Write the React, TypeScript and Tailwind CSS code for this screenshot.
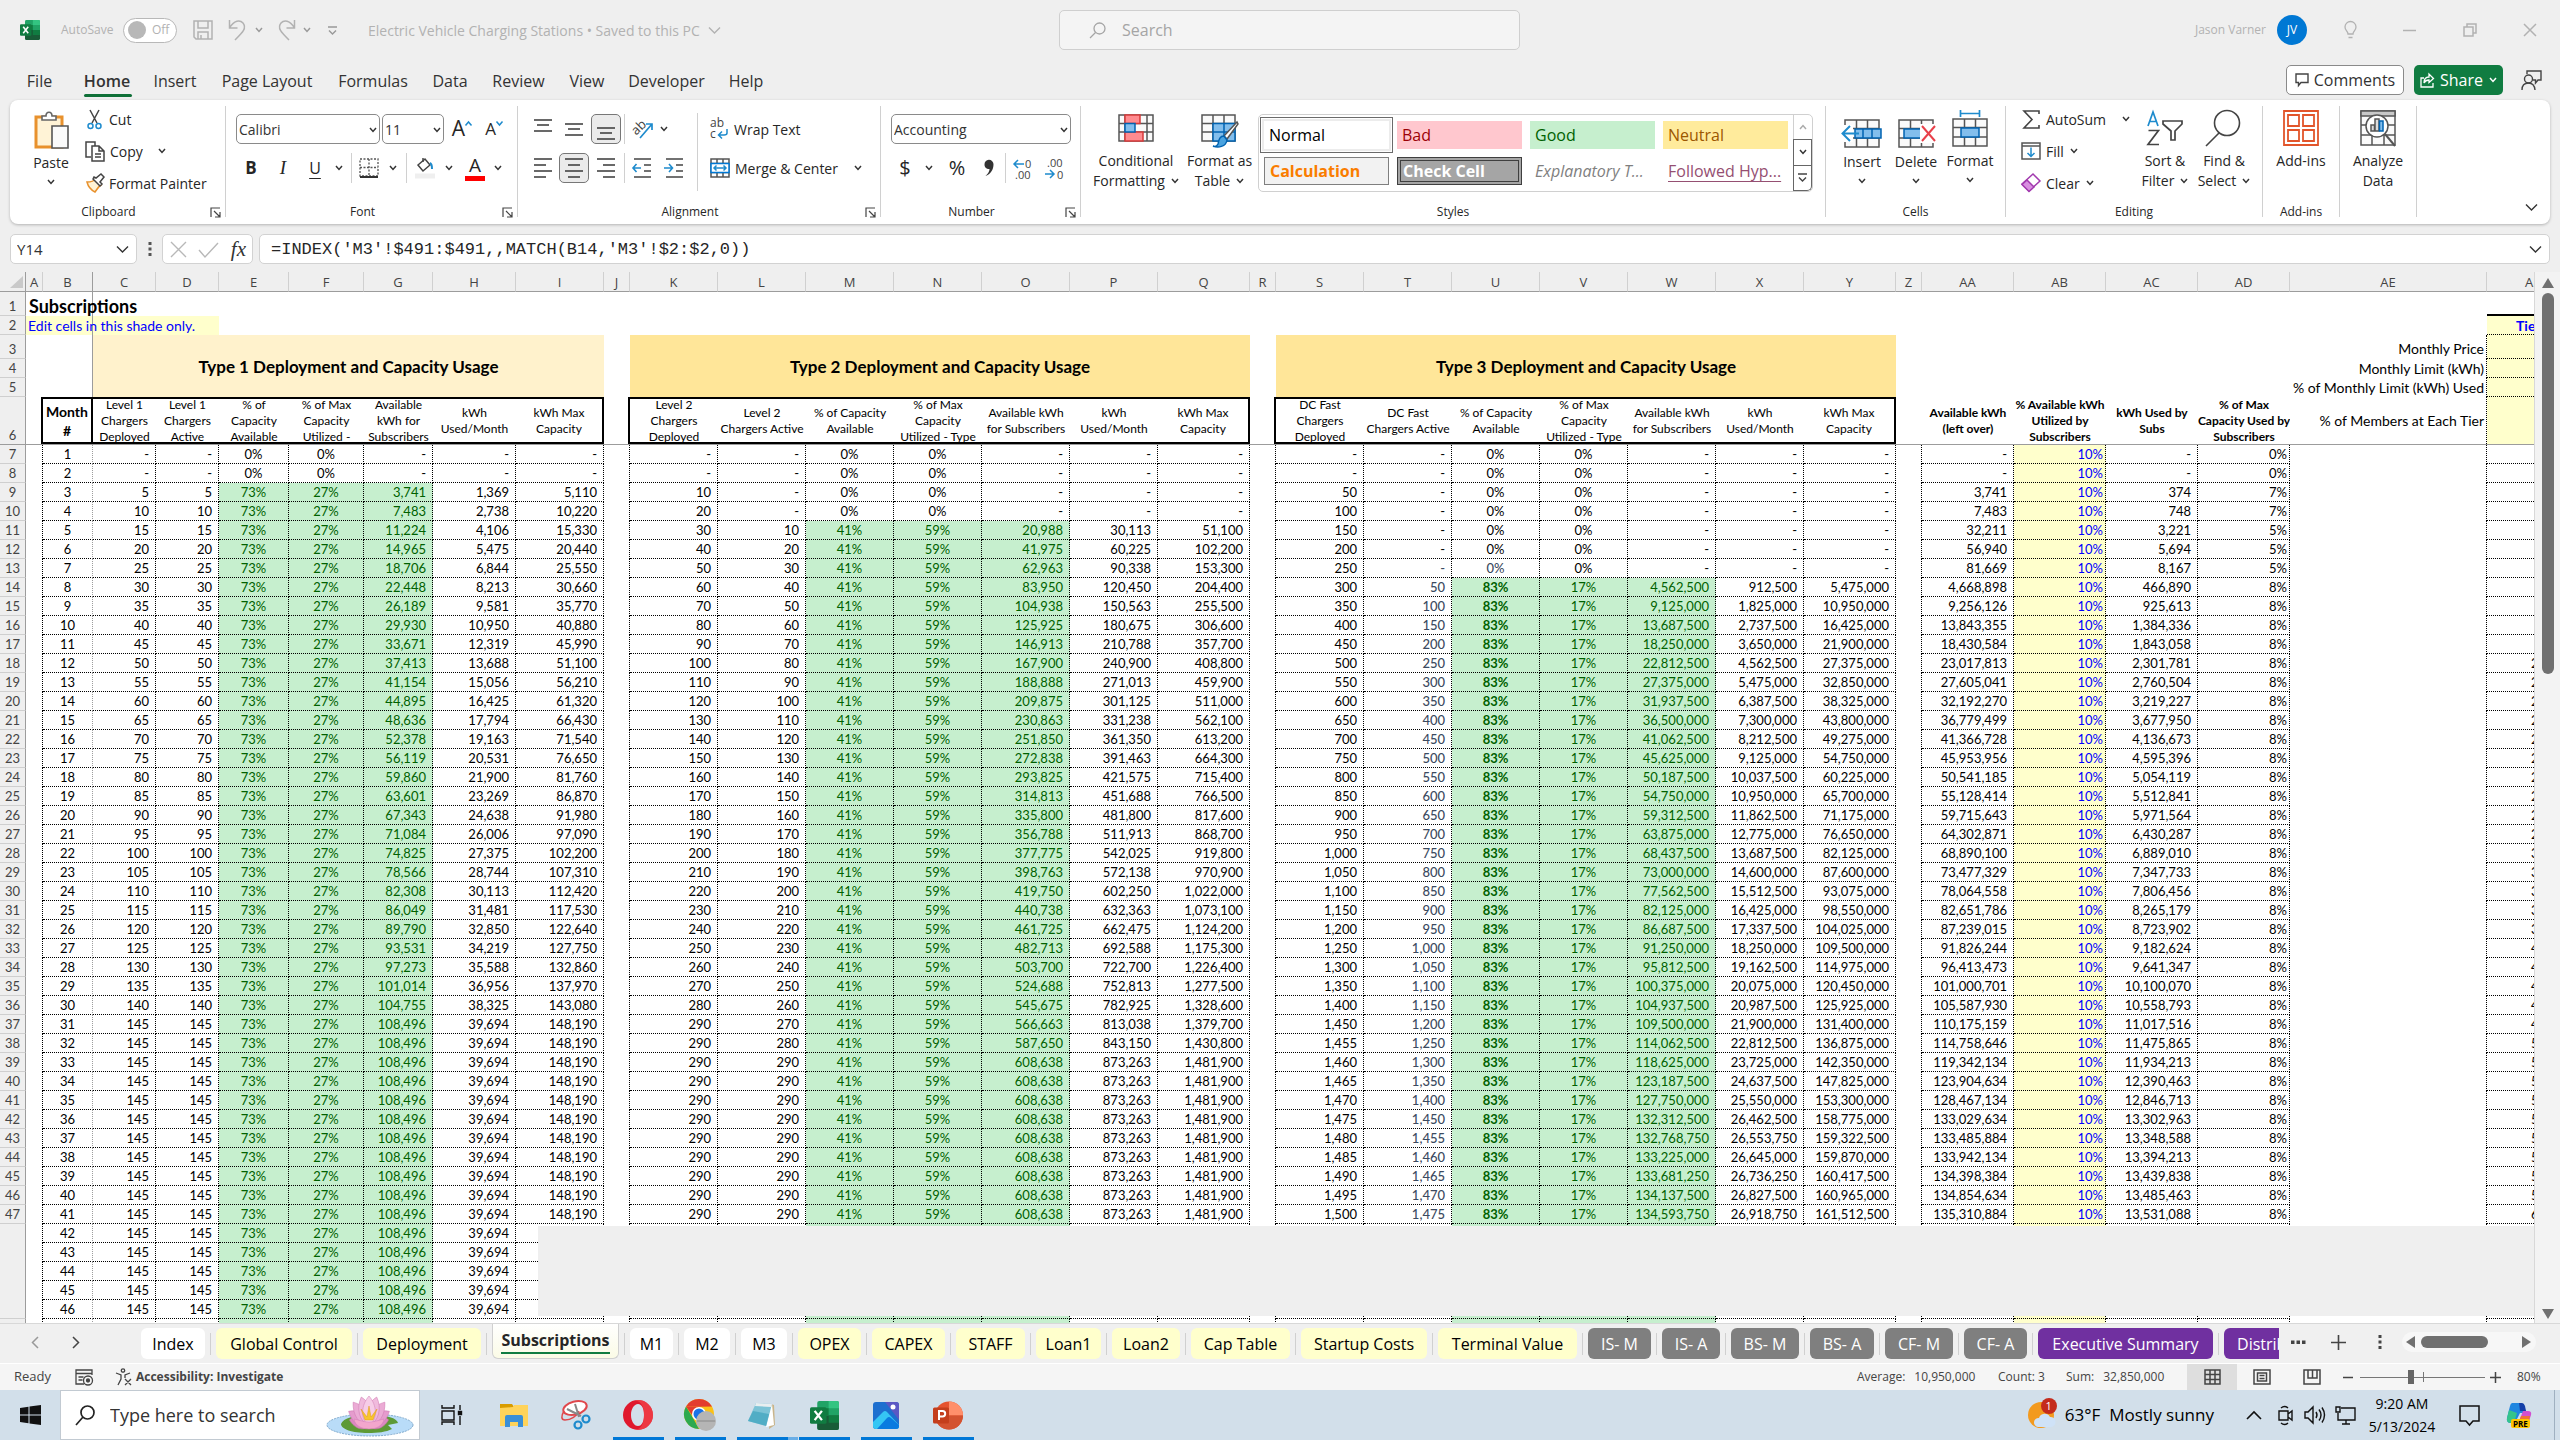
import React from "react";

type Kids = { children?: React.ReactNode; className?: string };

/* ---------- icon primitives ---------- */

type SvgProps = { w: number; h: number; children: React.ReactNode; className?: string; stroke?: string; sw?: number };

function Svg({ w, h, children, className = "", stroke = "#444", sw = 1.5 }: SvgProps) {
  return (
    <svg
      aria-hidden="true"
      width={w}
      height={h}
      viewBox={`0 0 ${w} ${h}`}
      fill="none"
      stroke={stroke}
      strokeWidth={sw}
      className={`shrink-0 overflow-visible ${className}`}
    >
      {children}
    </svg>
  );
}

function Chevron({ className = "", stroke = "#333", big = false }: { className?: string; stroke?: string; big?: boolean }) {
  return big ? (
    <Svg w={13} h={9} stroke={stroke} sw={1.4} className={className}>
      <path d="M1 1.5l5.5 5.5L12 1.5" />
    </Svg>
  ) : (
    <Svg w={8} h={6} stroke={stroke} sw={1.5} className={className}>
      <path d="M1 1l3 3.4L7 1" />
    </Svg>
  );
}

function ExcelLogo({ size }: { size: number }) {
  return (
    <svg aria-hidden="true" width={size} height={size} viewBox="0 0 28 28" className="shrink-0">
      <rect x="7" y="0" width="21" height="28" rx="2" fill="#21a366" />
      <path d="M18 0h8a2 2 0 0 1 2 2v5H18z" fill="#33c481" />
      <path d="M7 7h11v7H7z" fill="#107c41" />
      <path d="M7 14h21v12a2 2 0 0 1-2 2H9a2 2 0 0 1-2-2z" fill="#185c37" />
      <path d="M18 14h10v7H18z" fill="#107c41" />
      <rect x="0" y="6" width="16" height="16" rx="1.5" fill="#107c41" />
      <path d="M4.5 9.5l7 9M11.500 9.500l-7 9" stroke="#fff" strokeWidth="2.200" />
    </svg>
  );
}

function Lines({ rows, w = 18, h }: { rows: [number, number, number][]; w?: number; h: number }) {
  return (
    <Svg w={w} h={h} sw={1.6}>
      {rows.map(([x1, x2, y], i) => (
        <path key={i} d={`M${x1} ${y}H${x2}`} />
      ))}
    </Svg>
  );
}

function GridIcon({ kind }: { kind: "insert" | "delete" | "format" }) {
  return (
    <Svg w={42} h={38} stroke="#555" sw={1.5}>
      <path d="M4 10h34v27H4zM4 18.500h34M4 28h34M15.500 10v27M26.500 10v27" fill="#fafafa" />
      {kind === "insert" && (
        <>
          <path d="M14 19h26v9H14z" fill="#83beec" stroke="#0063b1" />
          <path d="M22 19v9M31 19v9" stroke="#0063b1" />
          <path d="M0 15h12v17H0z" fill="#fff" stroke="none" />
          <path d="M18 23.500H2M9 16l-7.500 7.500L9 31" stroke="#1e8bcd" strokeWidth="2" />
        </>
      )}
      {kind === "delete" && (
        <>
          <path d="M9 19h18v9H9z" fill="#83beec" stroke="#0063b1" />
          <path d="M25 14h17v19H25z" fill="#fff" stroke="none" />
          <path d="M27 16l13 15M40 16L27 31" stroke="#e8404a" strokeWidth="2" />
        </>
      )}
      {kind === "format" && (
        <>
          <path d="M12 19h18v9H12z" fill="#83beec" stroke="#0063b1" />
          <path d="M11 4.500h20M11.500 1v7M30.500 1v7" stroke="#1e8bcd" strokeWidth="1.700" />
        </>
      )}
    </Svg>
  );
}

/* ---------- ribbon helpers ---------- */

function Slot({ children, className = "", label }: Kids & { label: string }) {
  return (
    <button type="button" aria-label={label} className={`flex h-[30px] shrink-0 items-center justify-center ${className}`}>
      {children}
    </button>
  );
}

function VSep({ className = "" }: { className?: string }) {
  return <div className={`w-px shrink-0 bg-[#d0d0d0] ${className}`} />;
}

function Group({ label, width, launcher = false, children }: Kids & { label: string; width: string; launcher?: boolean }) {
  return (
    <>
      <section aria-label={label} className={`flex shrink-0 flex-col ${width}`}>
        <div className="h-[100px]">{children}</div>
        <div className={`relative flex h-[24px] items-center justify-center text-[12px] ${launcher ? "pr-[18px]" : ""}`}>
          {label}
          {launcher && (
            <button type="button" aria-label={`${label} settings`} className="absolute right-[4px] top-[7px]">
              <Svg w={11} h={11} stroke="#444" sw={1.2}>
                <path d="M1 10V1h9M4 4l6 6M10 5v5H5" />
              </Svg>
            </button>
          )}
        </div>
      </section>
      <VSep className="mt-[6px] h-[111px]" />
    </>
  );
}

function BigButton({ icon, lines, chevron, className = "" }: { icon: React.ReactNode; lines: string[]; chevron?: "inline" | "below"; className?: string }) {
  return (
    <button type="button" className={`flex shrink-0 flex-col items-center pt-[8px] ${className}`}>
      <span className="flex h-[40px] items-center justify-center">{icon}</span>
      <span className="mt-[3px] flex flex-col items-center text-[14px] leading-[20px]">
        {lines.map((l, i) => (
          <span key={l} className="flex items-center gap-1.5 whitespace-nowrap">
            {l}
            {chevron === "inline" && i === lines.length - 1 && <Chevron />}
          </span>
        ))}
      </span>
      {chevron === "below" && <Chevron className="mt-[6px]" />}
    </button>
  );
}

function Picker({ label, options, className }: { label: string; options: string[]; className: string }) {
  return (
    <label className={`relative block h-[30px] shrink-0 ${className}`}>
      <span className="sr-only">{label}</span>
      <select className="h-full w-full appearance-none rounded-[5px] border border-[#8a8a8a] bg-white pl-[2px] text-[14px] text-[#333]">
        {options.map((o) => (
          <option key={o}>{o}</option>
        ))}
      </select>
      <Chevron className="pointer-events-none absolute right-[3px] top-[13px]" />
    </label>
  );
}

/* ---------- title bar and menu ---------- */

function TitleBar() {
  return (
    <header className="grid h-[60px] shrink-0 grid-cols-[1059fr_461px_1040fr] text-[#b2b2b2]">
      <div className="flex items-center pl-[20px]">
        <ExcelLogo size={20} />
        <label className="ml-[21px] flex items-center text-[12px]">
          <span className="w-[62px]">AutoSave</span>
          <span className="relative flex h-[25px] w-[54px] items-center rounded-full border border-[#b8b8b8] bg-white">
            <input type="checkbox" role="switch" className="ml-[4px] h-[18px] w-[18px] appearance-none rounded-full bg-[#b8b8b8]" />
            <span className="ml-[6px]">Off</span>
          </span>
        </label>
        <button type="button" aria-label="Save" className="ml-[16px]">
          <Svg w={20} h={20} stroke="#b2b2b2" sw={1.5}>
            <path d="M1 1h18v18H3l-2-2zM5 1v7h10V1M5 19v-7h10v7M8 19v-4" />
          </Svg>
        </button>
        <button type="button" aria-label="Undo" className="ml-[15px] flex items-center gap-[8px]">
          <Svg w={19} h={22} stroke="#b2b2b2" sw={1.5}>
            <path d="M1.500 1v8h8M1.500 9C6 1 12 .5 15 4c4 5 0 9-8 17" />
          </Svg>
          <Chevron stroke="#999" />
        </button>
        <button type="button" aria-label="Redo" className="ml-[14px] flex items-center gap-[7px]">
          <Svg w={19} h={22} stroke="#b2b2b2" sw={1.5}>
            <path d="M17.500 1v8h-8M17.500 9C13 1 7 .5 4 4c-4 5 0 9 8 17" />
          </Svg>
          <Chevron stroke="#999" />
        </button>
        <button type="button" aria-label="Customize toolbar" className="ml-[17px]">
          <Svg w={9} h={9} stroke="#999" sw={1.4}>
            <path d="M0 1h9M1 4.500l3.500 3.500L8 4.500" />
          </Svg>
        </button>
        <button type="button" className="ml-[31px] flex items-center gap-[8px] whitespace-nowrap text-[14px]">
          Electric Vehicle Charging Stations • Saved to this PC
          <Chevron big stroke="#b2b2b2" />
        </button>
      </div>
      <label className="mt-[10px] flex h-[40px] items-center rounded-[5px] border border-[#cfcfcf] bg-[#f4f4f4] pl-[29px] text-[#8d8d8d]">
        <Svg w={17} h={17} stroke="#a5a5a5" sw={1.3}>
          <circle cx="10.500" cy="6.500" r="5.500" />
          <path d="M6.500 10.500L1 16" />
        </Svg>
        <input aria-label="Search" placeholder="Search" className="ml-[16px] w-80 bg-transparent text-[16px] outline-none placeholder:text-[#a5a5a5]" />
      </label>
      <div className="flex items-center justify-end pr-[23px]">
        <span className="text-[12px]">Jason Varner</span>
        <button type="button" className="ml-[11px] h-[30px] w-[30px] rounded-full bg-[#0078d4] text-[12px] text-white">
          JV
        </button>
        <button type="button" aria-label="Tips" className="ml-[37px]">
          <Svg w={13} h={18} stroke="#b2b2b2" sw={1.3}>
            <path d="M4 13c0-3-3-3.500-3-7a5.500 5.500 0 0 1 11 0c0 3.500-3 4-3 7zM4.500 16.500h4" />
          </Svg>
        </button>
        <button type="button" aria-label="Minimize" className="ml-[46px]">
          <Svg w={13} h={13} stroke="#b2b2b2">
            <path d="M0 6.500h13" />
          </Svg>
        </button>
        <button type="button" aria-label="Restore" className="ml-[47px]">
          <Svg w={14} h={14} stroke="#b2b2b2">
            <path d="M1 4h9v9H1zM4 3.500V1h9v9h-2.500" />
          </Svg>
        </button>
        <button type="button" aria-label="Close" className="ml-[46px]">
          <Svg w={14} h={14} stroke="#b2b2b2">
            <path d="M1 1l12 12M13 1L1 13" />
          </Svg>
        </button>
      </div>
    </header>
  );
}

const MENUS: [string, string][] = [
  ["File", "w-[45px]"],
  ["Home", "w-[58px]"],
  ["Insert", "w-[54px]"],
  ["Page Layout", "w-[106px]"],
  ["Formulas", "w-[82px]"],
  ["Data", "w-[48px]"],
  ["Review", "w-[65px]"],
  ["View", "w-[48px]"],
  ["Developer", "w-[87px]"],
  ["Help", "w-[48px]"],
];

function MenuBar() {
  return (
    <nav className="flex h-[40px] shrink-0 items-center">
      <div className="flex h-full gap-[12px] pl-[17px] text-[16px]">
        {MENUS.map(([name, w]) => (
          <button
            key={name}
            type="button"
            className={`relative h-full whitespace-nowrap pt-[2px] ${w} ${name === "Home" ? "ml-[4px] font-semibold" : ""}`}
          >
            {name}
            {name === "Home" && <span className="absolute bottom-[3px] left-[6px] h-[3px] w-[48px] rounded bg-[#0f7038]" />}
          </button>
        ))}
      </div>
      <div className="ml-auto flex items-center pr-[18px]">
        <button type="button" className="flex h-[30px] w-[118px] items-center justify-center gap-[5px] rounded-[5px] border border-[#8a8a8a] bg-white text-[16px]">
          <Svg w={14} h={14} sw={1.400}>
            <path d="M1 1h12v8.500H6L3.500 12.500V9.500H1z" />
          </Svg>
          Comments
        </button>
        <button type="button" className="ml-[10px] flex h-[30px] w-[89px] items-center justify-center gap-[6px] rounded-[5px] bg-[#107c41] text-[16px] text-white">
          <Svg w={14} h={15} stroke="#fff" sw={1.3}>
            <path d="M4 5H1v9h12v-4M4 10c0-4 2-6 5-6V1l4.500 4.500L9 9.500V7C7 7 5 8 4 10z" />
          </Svg>
          Share
          <Chevron stroke="#fff" />
        </button>
        <button type="button" aria-label="Presence" className="ml-[18px]">
          <Svg w={21} h={21} sw={1.400}>
            <circle cx="7.500" cy="9" r="4" />
            <path d="M1 20c0-5 3-7 6.500-7s6 2 6.500 7M6 4V1h14v9h-3l-2.500 3v-3H12" />
          </Svg>
        </button>
      </div>
    </nav>
  );
}

/* ---------- ribbon ---------- */

const STYLE_CELLS: { name: string; cls: string }[] = [
  { name: "Normal", cls: "bg-white text-black ring-2 ring-[#ececec] outline outline-[#6b6b6b] outline-offset-[3px]" },
  { name: "Bad", cls: "bg-[#ffc7ce] text-[#9c0006]" },
  { name: "Good", cls: "bg-[#c6efce] text-[#006100]" },
  { name: "Neutral", cls: "bg-[#ffeb9c] text-[#9c5700]" },
  { name: "Calculation", cls: "bg-[#f2f2f2] font-bold text-[#fa7d00] border border-[#7f7f7f]" },
  { name: "Check Cell", cls: "bg-[#a5a5a5] font-bold text-white border-4 border-double border-[#3f3f3f]" },
  { name: "Explanatory T...", cls: "italic text-[#7f7f7f]" },
  { name: "Followed Hyp...", cls: "text-[#954f72] underline underline-offset-4" },
];

function Ribbon() {
  return (
    <div className="mx-[10px] flex h-[124px] shrink-0 rounded-[8px] bg-white text-[#262626] shadow-[0_1px_3px_rgba(0,0,0,0.25)]">
      <Group label="Clipboard" width="w-[215px]" launcher>
        <div className="flex">
          <BigButton
            className="ml-[20px] w-[42px] pt-[10px]"
            lines={["Paste"]}
            chevron="below"
            icon={
              <Svg w={36} h={40} sw={1.6}>
                <path d="M3 7h26v30H3z" fill="#fff3d6" stroke="#e8912d" strokeWidth="3" />
                <path d="M9 10V6h4c0-5 6-5 6 0h4v4z" fill="#fff" stroke="#666" />
                <path d="M19 16h16v22H19z" fill="#fafafa" stroke="#555" />
              </Svg>
            }
          />
          <div className="ml-[13px] pt-[3px] text-[14px]">
            <button type="button" className="flex h-[32px] items-center gap-[7px] pl-[2px]">
              <Svg w={15} h={21}>
                <path d="M3 1l7 13M12 1L5 14" />
                <circle cx="3.500" cy="17" r="2.500" stroke="#1e8bcd" />
                <circle cx="11.500" cy="17" r="2.500" stroke="#1e8bcd" />
              </Svg>
              Cut
            </button>
            <button type="button" className="flex h-[32px] items-center gap-[5px]">
              <Svg w={20} h={21}>
                <path d="M6 16H1V1h9v4" />
                <path d="M7 5h7l5 5v10H7zM14 5v5h5M10 13h6M10 16h6" />
              </Svg>
              Copy
              <Chevron className="ml-[10px]" />
            </button>
            <button type="button" className="flex h-[32px] items-center gap-[4px] whitespace-nowrap">
              <Svg w={20} h={20}>
                <path d="M2 9c4 0 7-1 8-3l6 6c-2 1-4 4-6 7-4-2-7-6-8-10z" fill="#fff3d6" stroke="#e8912d" />
                <path d="M8 6l7 7 2-2-2-2 4-5-3-3-5 4-2-1z" fill="#fff" />
              </Svg>
              Format Painter
            </button>
          </div>
        </div>
      </Group>

      <Group label="Font" width="w-[291px]" launcher>
        <div className="flex flex-col gap-[9px] pt-[14px]">
          <div className="flex pl-[10px]">
            <Picker label="Font name" options={["Calibri", "Arial"]} className="w-[144px]" />
            <Picker label="Font size" options={["11", "12"]} className="ml-[2px] w-[62px]" />
            <Slot label="Increase font size" className="ml-[6px] w-[24px] text-[21px]">
              <span>A</span>
              <Svg w={7} h={5} stroke="#1e8bcd" className="-mt-[12px]">
                <path d="M.5 4.500l3-3.500 3 3.500" />
              </Svg>
            </Slot>
            <Slot label="Decrease font size" className="ml-[8px] w-[24px] text-[17px]">
              <span>A</span>
              <Svg w={7} h={5} stroke="#1e8bcd" className="-mt-[12px]">
                <path d="M.5 .5l3 3.500 3-3.500" />
              </Svg>
            </Slot>
          </div>
          <div className="flex pl-[9px]">
            <Slot label="Bold" className="w-[32px] text-[17px] font-bold">B</Slot>
            <Slot label="Italic" className="w-[32px] font-['Liberation_Serif'] text-[19px] italic">I</Slot>
            <Slot label="Underline" className="w-[32px] text-[16px] underline underline-offset-4">U</Slot>
            <Slot label="Underline options" className="w-[16px]"><Chevron /></Slot>
            <VSep className="ml-[4px]" />
            <Slot label="Borders" className="w-[34px]">
              <Svg w={20} h={20} stroke="#555" sw={1.3}>
                <path d="M1 1h18v17H1zM10 1v17M1 9.500h18" strokeDasharray="2 1.500" />
                <path d="M1 19h18" stroke="#333" strokeWidth="2" />
              </Svg>
            </Slot>
            <Slot label="Border options" className="w-[14px]"><Chevron /></Slot>
            <VSep className="ml-[6px]" />
            <Slot label="Fill colour" className="w-[36px]">
              <Svg w={20} h={22}>
                <path d="M3 8l7-6 5 6-7 6z" />
                <path d="M8 5V1" />
                <path d="M15 6c2 1 2 4 2 6" stroke="#1e8bcd" strokeWidth="2" />
                <path d="M0 19h20" stroke="#efefef" strokeWidth="5" />
              </Svg>
            </Slot>
            <Slot label="Fill options" className="w-[12px]"><Chevron /></Slot>
            <Slot label="Font colour" className="ml-[6px] w-[28px] flex-col">
              <span className="text-[19px] leading-[18px]">A</span>
              <span className="mt-[2px] h-[5px] w-[20px] bg-[#ff0000]" />
            </Slot>
            <Slot label="Font colour options" className="ml-[2px] w-[14px]"><Chevron /></Slot>
          </div>
        </div>
      </Group>

      <Group label="Alignment" width="w-[362px]" launcher>
        <div className="flex">
          <div className="flex flex-col gap-[9px] pl-[9px] pt-[14px]">
            <div className="flex">
              <Slot label="Top align" className="w-[31px] pb-[8px]"><Lines h={13} rows={[[0, 18, 1], [3, 15, 6], [0, 18, 12]]} /></Slot>
              <Slot label="Middle align" className="w-[31px]"><Lines h={13} rows={[[0, 18, 1], [3, 15, 6], [0, 18, 12]]} /></Slot>
              <Slot label="Bottom align" className="ml-[2px] w-[30px] rounded-[5px] border border-[#777] bg-[#ebebeb] pt-[8px]"><Lines h={13} rows={[[0, 18, 1], [3, 15, 6], [0, 18, 12]]} /></Slot>
              <VSep className="ml-[3px]" />
              <Slot label="Orientation" className="w-[34px]">
                <Svg w={22} h={22} stroke="#1e8bcd" sw={1.7}>
                  <path d="M9 20L21 6M15 6h6v6" />
                  <text x="0" y="15" fontSize="13" fill="#444" stroke="none" transform="rotate(-45 6 10)">ab</text>
                </Svg>
              </Slot>
              <Slot label="Orientation options" className="w-[10px]"><Chevron /></Slot>
            </div>
            <div className="flex">
              <Slot label="Align left" className="w-[31px]"><Lines h={20} rows={[[0, 18, 1], [0, 12, 7], [0, 18, 13], [0, 12, 19]]} /></Slot>
              <Slot label="Align centre" className="ml-px w-[30px] rounded-[5px] border border-[#777] bg-[#ebebeb]"><Lines h={20} rows={[[0, 18, 1], [3, 15, 7], [0, 18, 13], [3, 15, 19]]} /></Slot>
              <Slot label="Align right" className="ml-[2px] w-[30px]"><Lines h={20} rows={[[0, 18, 1], [6, 18, 7], [0, 18, 13], [6, 18, 19]]} /></Slot>
              <VSep className="ml-[3px]" />
              <Slot label="Decrease indent" className="w-[34px]">
                <Svg w={20} h={20} sw={1.6}>
                  <path d="M2 1h17M12 7h7M12 13h7M2 19h17" />
                  <path d="M9 10H1M4.500 6L1 10l3.500 4" stroke="#1e8bcd" />
                </Svg>
              </Slot>
              <Slot label="Increase indent" className="w-[30px]">
                <Svg w={20} h={20} sw={1.6}>
                  <path d="M2 1h17M12 7h7M12 13h7M2 19h17" />
                  <path d="M0 10h8M5 6l3.500 4L5 14" stroke="#1e8bcd" />
                </Svg>
              </Slot>
            </div>
          </div>
          <VSep className="ml-[8px] mt-[13px] h-[78px]" />
          <div className="flex flex-col gap-[9px] pl-[12px] pt-[14px] text-[14px]">
            <button type="button" className="flex h-[30px] items-center gap-[5px]">
              <Svg w={19} h={22} stroke="#1e8bcd">
                <text x="0" y="9" fontSize="12" fill="#444" stroke="none">ab</text>
                <text x="0" y="20" fontSize="12" fill="#444" stroke="none">c</text>
                <path d="M17 11v4q0 2-3 2H9M12 13.500L8.500 17l3.500 3.500" />
              </Svg>
              Wrap Text
            </button>
            <button type="button" className="flex h-[30px] items-center gap-[5px] whitespace-nowrap">
              <Svg w={20} h={20} stroke="#555">
                <path d="M1 1h18v18H1zM1 5.500h18M1 14.500h18M7 1v4M13 1v4M7 15v4M13 15v4" />
                <path d="M1 5.500h18v9H1z" fill="#fff" stroke="#0078d4" />
                <path d="M4 10h12M6.500 7.500L4 10l2.500 2.500M13.500 7.500L16 10l-2.500 2.500" stroke="#1e8bcd" />
              </Svg>
              Merge &amp; Center
              <Chevron className="ml-[11px]" />
            </button>
          </div>
        </div>
      </Group>

      <Group label="Number" width="w-[199px]" launcher>
        <div className="flex flex-col gap-[9px] pl-[10px] pt-[14px]">
          <Picker label="Number format" options={["Accounting", "General"]} className="w-[180px]" />
          <div className="flex">
            <Slot label="Accounting format" className="w-[28px] text-[20px]">$</Slot>
            <Slot label="Currency options" className="ml-[5px] w-[10px]"><Chevron /></Slot>
            <Slot label="Percent" className="ml-[7px] w-[32px] text-[20px]">%</Slot>
            <Slot label="Comma style" className="w-[32px]">
              <Svg w={10} h={18} stroke="none">
                <path d="M9.500 5c0 6-3 10-8 12 3-3 4-5 4-7C2 10 .5 8 .5 5.500a4.500 4.500 0 0 1 9-.5z" fill="#333" />
              </Svg>
            </Slot>
            <VSep />
            <Slot label="Increase decimal" className="w-[34px]">
              <Svg w={20} h={21} stroke="#1e8bcd">
                <path d="M11 6H1M5 2L1 6l4 4" />
                <text x="12" y="10" fontSize="11" fill="#444" stroke="none">0</text>
                <text x="2" y="21" fontSize="11" fill="#444" stroke="none">.00</text>
              </Svg>
            </Slot>
            <Slot label="Decrease decimal" className="w-[30px]">
              <Svg w={20} h={21} stroke="#1e8bcd">
                <path d="M0 16h9M5 12l4 4-4 4" />
                <text x="2" y="9" fontSize="11" fill="#444" stroke="none">.00</text>
                <text x="12" y="21" fontSize="11" fill="#444" stroke="none">0</text>
              </Svg>
            </Slot>
          </div>
        </div>
      </Group>

      <Group label="Styles" width="w-[744px]">
        <div className="flex">
          <BigButton
            className="ml-[10px] w-[90px]"
            lines={["Conditional", "Formatting"]}
            chevron="inline"
            icon={
              <Svg w={36} h={28} stroke="#555">
                <path d="M1 1h34v26H1zM1 9.500h34M1 18h34M7 1v26M29 1v26" fill="#fafafa" />
                <path d="M7 1h15v8.500H7zM7 18h18v9H7z" fill="#ff8b8f" stroke="#d83b3b" />
                <path d="M7 9.500h10V18H7z" fill="#83beec" stroke="#0063b1" />
              </Svg>
            }
          />
          <BigButton
            className="w-[77px]"
            lines={["Format as", "Table"]}
            chevron="inline"
            icon={
              <Svg w={38} h={34} stroke="#555" className="-mb-[6px]">
                <path d="M1 1h33v26H1zM1 9.500h33M1 18h33M12 1v26M23 1v26" fill="#fafafa" />
                <path d="M12 9.500h22V27H12z" fill="#83beec" stroke="#0063b1" />
                <path d="M23 9.500V27M12 18h22" stroke="#0063b1" />
                <path d="M36 8l-13 14 3 3L37 10z" fill="#fff" stroke="#555" />
                <path d="M23 22c-4 0-5 3-6 8-1 2-3 3-5 2 5 2 13 1 14-6z" fill="#4aa3e0" stroke="#0063b1" />
              </Svg>
            }
          />
          <div className="mt-[14px] flex h-[78px] rounded-[5px] border border-[#d0d0d0]">
            <div className="grid grid-cols-4 content-start gap-[8px] px-[5px] pt-[6px]">
              {STYLE_CELLS.map((c) => (
                <button key={c.name} type="button" className={`h-[28px] w-[125px] overflow-hidden whitespace-nowrap text-left text-[16px] leading-[20px] ${c.cls} ${c.name === "Check Cell" ? "pl-[2px]" : "pl-[5px]"}`}>
                  {c.name}
                </button>
              ))}
            </div>
            <div className="flex w-[19px] flex-col">
              <button type="button" aria-label="Previous styles" className="flex flex-1 items-center justify-center border-l border-[#d0d0d0]"><Chevron className="rotate-180" stroke="#aaa" /></button>
              <button type="button" aria-label="Next styles" className="flex flex-1 items-center justify-center border border-[#666]"><Chevron /></button>
              <button type="button" aria-label="All styles" className="flex flex-1 items-center justify-center rounded-br-[5px] border border-t-0 border-[#666]">
                <Svg w={9} h={9} sw={1.4}>
                  <path d="M0 1h9M1 4.500l3.500 3.500L8 4.500" />
                </Svg>
              </button>
            </div>
          </div>
        </div>
      </Group>

      <Group label="Cells" width="w-[179px]">
        <div className="flex">
          <BigButton className="ml-[9px] w-[54px] pt-[9px]" lines={["Insert"]} chevron="below" icon={<GridIcon kind="insert" />} />
          <BigButton className="w-[54px] pt-[9px]" lines={["Delete"]} chevron="below" icon={<GridIcon kind="delete" />} />
          <BigButton className="w-[54px]" lines={["Format"]} chevron="below" icon={<GridIcon kind="format" />} />
        </div>
      </Group>

      <Group label="Editing" width="w-[256px]">
        <div className="flex">
          <div className="w-[124px] pl-[15px] pt-[3px] text-[14px]">
            <button type="button" className="flex h-[32px] items-center gap-[6px] pl-[2px]">
              <Svg w={17} h={19} sw={1.6}>
                <path d="M16 4V1H1l8 8.500L1 18h15v-3" />
              </Svg>
              AutoSum
              <Chevron className="ml-[10px]" />
            </button>
            <button type="button" className="flex h-[32px] items-center gap-[5px]">
              <Svg w={20} h={18} stroke="#555">
                <path d="M1 1h18v16H1zM1 4h18" />
                <path d="M10 5.500v9M6.500 11l3.500 3.500 3.500-3.500" stroke="#1e8bcd" />
              </Svg>
              Fill
              <Chevron className="ml-[1px]" />
            </button>
            <button type="button" className="flex h-[32px] items-center gap-[5px]">
              <Svg w={20} h={20} stroke="#a23aae">
                <path d="M12 1l7 7-11 10-7-7z" fill="#fff" />
                <path d="M6 7l7 7-5 4.500-7-7z" fill="#d88fe0" />
              </Svg>
              Clear
              <Chevron className="ml-[1px]" />
            </button>
          </div>
          <BigButton
            className="w-[70px]"
            lines={["Sort &", "Filter"]}
            chevron="inline"
            icon={
              <Svg w={38} h={36} sw={1.7}>
                <path d="M2 16L7 2l5 14M3.500 11.500h7" stroke="#1e8bcd" />
                <path d="M2.500 20.500h10L2 34.500h11" />
                <path d="M17 11h19v3l-7 7v9h-4v-9l-8-7z" />
              </Svg>
            }
          />
          <BigButton
            className="w-[48px]"
            lines={["Find &", "Select"]}
            chevron="inline"
            icon={
              <Svg w={38} h={38} sw={1.6}>
                <circle cx="22" cy="14" r="12.500" />
                <path d="M14 24L1 37" />
              </Svg>
            }
          />
        </div>
      </Group>

      <Group label="Add-ins" width="w-[76px]">
        <BigButton
          className="w-full"
          lines={["Add-ins"]}
          icon={
            <Svg w={36} h={36} stroke="#e2552b" sw={1.8}>
              <path d="M1 1h34v34H1z" />
              <path d="M5 5h11v11H5zM20 5h11v11H20zM5 20h11v11H5zM20 20h11v11H20z" />
            </Svg>
          }
        />
      </Group>

      <Group label="" width="w-[76px]">
        <BigButton
          className="w-full"
          lines={["Analyze", "Data"]}
          icon={
            <Svg w={36} h={37} stroke="#555">
              <path d="M1 1h34v34H1z" fill="#fafafa" />
              <path d="M1 1h34v5H1z" fill="#c8c8c8" />
              <path d="M1 15h34M1 25h34M12 25v10M24 25v10" />
              <circle cx="17" cy="16" r="11" fill="#fff" />
              <path d="M25 24l10 12" strokeWidth="2" />
              <path d="M11 15h3.500v6H11zM15 9h4v12h-4z" fill="#ddd" />
              <path d="M19.500 11h3.500v10h-3.500z" fill="#83beec" stroke="#0063b1" />
            </Svg>
          }
        />
      </Group>

      <div className="flex flex-1 items-end justify-end pb-[12px] pr-[12px]">
        <button type="button" aria-label="Collapse ribbon"><Chevron big /></button>
      </div>
    </div>
  );
}

/* ---------- formula bar ---------- */

function FormulaBar() {
  const box = "flex h-[30px] items-center rounded-[5px] border border-[#d2d2d2] bg-white pt-px";
  return (
    <div className="flex h-[48px] shrink-0 items-center px-[10px] pt-[2px]">
      <label className={`${box} w-[127px] pr-[7px]`}>
        <input aria-label="Name box" defaultValue="Y14" className="w-full bg-transparent pl-[6px] text-[15px] text-[#333] outline-none" />
        <Chevron big />
      </label>
      <Svg w={4} h={16} className="ml-[11px]" stroke="none">
        <path d="M.5 1h3v3h-3zM.5 6.500h3v3h-3zM.5 12h3v3h-3z" fill="#555" />
      </Svg>
      <div className={`${box} ml-[10px] w-[91px] justify-between pl-[7px] pr-[6px]`}>
        <button type="button" aria-label="Cancel">
          <Svg w={17} h={17} stroke="#b8b8b8" sw={1.4}>
            <path d="M1 1l15 15M16 1L1 16" />
          </Svg>
        </button>
        <button type="button" aria-label="Enter">
          <Svg w={21} h={16} stroke="#b8b8b8" sw={1.4}>
            <path d="M1 8l6 7L20 1" />
          </Svg>
        </button>
        <button type="button" aria-label="Insert function" className="font-['Liberation_Serif'] text-[21px] italic leading-none text-[#333]">
          fx
        </button>
      </div>
      <label className={`${box} ml-[6px] flex-1 pr-[7px]`}>
        <input
          aria-label="Formula"
          defaultValue="=INDEX('M3'!$491:$491,,MATCH(B14,'M3'!$2:$2,0))"
          className="w-full bg-transparent pl-[11px] font-['Liberation_Mono'] text-[17px] text-[#262626] outline-none"
        />
        <Chevron big />
      </label>
    </div>
  );
}

/* ---------- sheet ---------- */

const COLS: [string, string][] = [
  ["A", "w-[17px]"], ["B", "w-[50px]"], ["C", "w-[63px]"], ["D", "w-[63px]"], ["E", "w-[70px]"], ["F", "w-[75px]"],
  ["G", "w-[69px]"], ["H", "w-[83px]"], ["I", "w-[88px]"], ["J", "w-[26px]"], ["K", "w-[88px]"], ["L", "w-[88px]"],
  ["M", "w-[88px]"], ["N", "w-[88px]"], ["O", "w-[88px]"], ["P", "w-[88px]"], ["Q", "w-[92px]"], ["R", "w-[26px]"],
  ["S", "w-[88px]"], ["T", "w-[88px]"], ["U", "w-[88px]"], ["V", "w-[88px]"], ["W", "w-[88px]"], ["X", "w-[88px]"],
  ["Y", "w-[92px]"], ["Z", "w-[26px]"], ["AA", "w-[92px]"], ["AB", "w-[92px]"], ["AC", "w-[92px]"], ["AD", "w-[92px]"],
  ["AE", "w-[197px]"], ["AF", ""],
];

const fmt = (n: number) => (n === 0 ? "-" : Math.round(n).toLocaleString("en-US"));

const level1 = (m: number) => (m < 3 ? 0 : Math.min(5 * (m - 2), 145));
const level2 = (m: number) => (m < 3 ? 0 : Math.min(10 * (m - 2), 290));
const fast = (m: number) => (m < 3 ? 0 : m <= 31 ? 50 * (m - 2) : 1450 + 5 * (m - 31));
const tierDigit = (m: number) => (m < 12 ? "" : m < 22 ? "2" : m < 27 ? "3" : m < 32 ? "4" : m < 41 ? "5" : "6");

const DOT_B = "border-b border-dotted border-b-black";
const DOT = "border-b border-r border-dotted border-black";
const GREEN = "bg-[#c6efce] text-[#006100]";

function Num({ children, className = "" }: Kids) {
  return <td className={`h-[19px] p-0 pr-[6px] text-right ${DOT} ${className}`}>{children}</td>;
}

function Mid({ children, className = "" }: Kids) {
  return <td className={`h-[19px] p-0 text-center ${DOT} ${className}`}>{children}</td>;
}

function Gap() {
  return <td className="border-r border-dotted border-black p-0" />;
}

function RowHead({ n, className = "", rule = true }: { n?: number; className?: string; rule?: boolean }) {
  return (
    <th scope="row" className={`border-r border-r-[#9c9c9c] bg-[#efefef] p-0 align-bottom text-[13px] font-normal leading-[17px] text-[#444] ${rule ? "border-b border-b-[#cfcfcf]" : ""} ${className}`}>
      {n}
    </th>
  );
}

function DataRow({ m }: { m: number }) {
  const a = level1(m);
  const k = level2(m);
  const l = level2(m - 2);
  const s = fast(m);
  const t = fast(m - 5);
  const left = 748.25 * a + 2098.75 * l + 91250 * t;
  const g1 = a > 0 ? GREEN : "";
  const g2 = l > 0 ? GREEN : "";
  const g3 = t > 0 ? GREEN : "";
  const slate = m >= 7 ? "font-medium text-[#3b4a60]" : "";
  return (
    <tr>
      <RowHead n={m <= 41 ? m + 6 : undefined} rule={m <= 41 || m === 46} />
      <Gap />
      <td className={`h-[19px] border-r border-r-[#9c9c9c] p-0 text-center ${DOT_B}`}>{m <= 46 ? m : ""}</td>
      <Num>{fmt(a)}</Num>
      <Num>{fmt(a)}</Num>
      <Mid className={g1}>{a > 0 ? "73%" : "0%"}</Mid>
      <Mid className={g1}>{a > 0 ? "27%" : "0%"}</Mid>
      <Num className={g1}>{fmt(748.25 * a)}</Num>
      <Num>{fmt(273.75 * a)}</Num>
      <Num>{fmt(1022 * a)}</Num>
      <Gap />
      <Num>{fmt(k)}</Num>
      <Num>{fmt(l)}</Num>
      <Mid className={g2}>{l > 0 ? "41%" : "0%"}</Mid>
      <Mid className={g2}>{l > 0 ? "59%" : "0%"}</Mid>
      <Num className={g2}>{fmt(2098.75 * l)}</Num>
      <Num>{fmt(3011.25 * l)}</Num>
      <Num>{fmt(5110 * l)}</Num>
      <Gap />
      <Num>{fmt(s)}</Num>
      <Num className={slate}>{fmt(t)}</Num>
      <Mid className={t > 0 ? `font-bold ${GREEN}` : slate}>{t > 0 ? "83%" : "0%"}</Mid>
      <Mid className={g3}>{t > 0 ? "17%" : "0%"}</Mid>
      <Num className={g3}>{fmt(91250 * t)}</Num>
      <Num>{fmt(18250 * t)}</Num>
      <Num>{fmt(109500 * t)}</Num>
      <Gap />
      <Num>{fmt(left)}</Num>
      <td className={`bg-[#ffffcc] p-0 pr-[2px] text-right text-[#0000ff] ${DOT}`}>10%</td>
      <Num>{fmt(left / 10)}</Num>
      <td className={`p-0 pr-[2px] text-right ${DOT}`}>{m < 3 ? "0%" : m < 5 ? "7%" : m < 8 ? "5%" : "8%"}</td>
      <Gap />
      <td className={`p-0 pl-[44px] ${DOT_B}`}>{tierDigit(m)}</td>
    </tr>
  );
}

const HEADS: Record<number, string[]> = {
  1: ["Level 1\nChargers\nDeployed", "Level 1\nChargers\nActive", "% of\nCapacity\nAvailable", "% of Max\nCapacity\nUtilized -", "Available\nkWh for\nSubscribers", "kWh\nUsed/Month", "kWh Max\nCapacity"],
  2: ["Level 2\nChargers\nDeployed", "Level 2\nChargers Active", "% of Capacity\nAvailable", "% of Max\nCapacity\nUtilized - Type", "Available kWh\nfor Subscribers", "kWh\nUsed/Month", "kWh Max\nCapacity"],
  3: ["DC Fast\nChargers\nDeployed", "DC Fast\nChargers Active", "% of Capacity\nAvailable", "% of Max\nCapacity\nUtilized - Type", "Available kWh\nfor Subscribers", "kWh\nUsed/Month", "kWh Max\nCapacity"],
};

function HeadText({ text, className = "" }: { text: string; className?: string }) {
  return (
    <div className={`flex items-center justify-center overflow-hidden whitespace-pre pt-px text-center text-[12px] leading-[16px] ${className}`}>
      {text}
    </div>
  );
}

function HeadGroup({ n }: { n: number }) {
  return (
    <>
      {HEADS[n].map((t, i) => (
        <td key={i} className={`border-y-2 border-black p-0 ${i === 6 ? "border-r-2" : ""}`}>
          <HeadText text={t} className="h-[43px]" />
        </td>
      ))}
    </>
  );
}

function Sheet() {
  const yellow = "bg-[#ffffcc]";
  const side = "p-0 pr-[2px] text-right text-[14px] leading-none border-r border-dotted border-black";
  const title = "p-0 text-center text-[17px] font-bold";
  return (
    <div className="relative min-h-0 min-w-0 flex-1 overflow-hidden border-r border-[#d8d8d8] bg-white">
      <table className="w-full table-fixed border-separate border-spacing-0 font-['Lato'] text-[13px] leading-[17px] whitespace-nowrap text-black">
        <colgroup>
          <col className="w-[26px]" />
          {COLS.map(([c, w]) => (
            <col key={c} className={w} />
          ))}
        </colgroup>
        <thead>
          <tr className="bg-[#efefef] font-['Open_Sans'] text-[13px] text-[#444]">
            <th className="h-[20px] border-b border-r border-[#9c9c9c] p-0">
              <Svg w={13} h={12} stroke="none" className="ml-[10px]">
                <path d="M13 0v12H0z" fill="#c9c9c9" />
              </Svg>
            </th>
            {COLS.map(([c]) => (
              <th key={c} scope="col" className={`h-[20px] overflow-hidden border-b border-b-[#9c9c9c] p-0 pt-px font-normal ${c === "AF" ? "pl-[38px] text-left" : "border-r"} ${c === "B" ? "border-r-[#9c9c9c]" : "border-r-[#d0d0d0]"}`}>
                {c}
              </th>
            ))}
          </tr>
        </thead>
        <tbody>
          <tr>
            <RowHead n={1} className="h-[24px]" />
            <td className="p-0 pl-[3px] pt-[3px] text-[18px] font-bold leading-[20px]">Subscriptions</td>
            <td className="border-r border-[#9c9c9c] p-0" />
            <td colSpan={29} className="p-0" />
            <td className="border-b-2 border-black p-0" />
          </tr>
          <tr>
            <RowHead n={2} className="h-[19px]" />
            <td className={`${yellow} p-0 pl-[2px] text-[14px] text-[#0000ff]`}>Edit cells in this shade only.</td>
            <td className={`${yellow} border-r border-[#9c9c9c] p-0`} />
            <td colSpan={2} className={`${yellow} p-0`} />
            <td colSpan={27} className="p-0" />
            <td className={`${yellow} ${DOT_B} p-0 pl-[29px] text-[14px] font-bold text-[#0000ff]`}>Tier 1</td>
          </tr>
          <tr>
            <RowHead n={3} className="h-[24px]" />
            <td className="p-0" />
            <td rowSpan={3} className="border-r border-[#9c9c9c] p-0" />
            <td rowSpan={3} colSpan={7} className={`bg-[#fff2cc] ${title}`}>Type 1 Deployment and Capacity Usage</td>
            <td rowSpan={3} className="p-0" />
            <td rowSpan={3} colSpan={7} className={`bg-[#ffe699] ${title}`}>Type 2 Deployment and Capacity Usage</td>
            <td rowSpan={3} className="p-0" />
            <td rowSpan={3} colSpan={7} className={`bg-[#ffe699] ${title}`}>Type 3 Deployment and Capacity Usage</td>
            <td rowSpan={3} colSpan={5} className="p-0" />
            <td className={`${side} align-bottom`}><div className="pb-[3px]">Monthly Price</div></td>
            <td className={`${yellow} ${DOT_B} p-0`} />
          </tr>
          <tr>
            <RowHead n={4} className="h-[19px]" />
            <td className="p-0" />
            <td className={side}>Monthly Limit (kWh)</td>
            <td className={`${yellow} ${DOT_B} p-0`} />
          </tr>
          <tr>
            <RowHead n={5} className="h-[19px]" />
            <td className="p-0" />
            <td className={side}>% of Monthly Limit (kWh) Used</td>
            <td className={`${yellow} ${DOT_B} p-0`} />
          </tr>
          <tr>
            <RowHead n={6} className="h-[47px]" rule={false} />
            <td className="border-r-2 border-black p-0" />
            <td className="border-y-2 border-r-2 border-black p-0 text-center text-[14px] font-bold leading-[19px]">
              Month
              <br />#
            </td>
            <HeadGroup n={1} />
            <td className="border-r-2 border-black p-0" />
            <HeadGroup n={2} />
            <td className="border-r-2 border-black p-0" />
            <HeadGroup n={3} />
            <td className="p-0" />
            {["Available kWh\n(left over)", "% Available kWh\nUtilized by\nSubscribers", "kWh Used by\nSubs", "% of Max\nCapacity Used by\nSubscribers"].map((t) => (
              <td key={t} className="p-0">
                <HeadText text={t} className="h-[47px] font-bold" />
              </td>
            ))}
            <td className={side}>% of Members at Each Tier</td>
            <td className={`${yellow} p-0`} />
          </tr>
          <tr>
            <td colSpan={33} className="h-px bg-[#9c9c9c] p-0" />
          </tr>
          {Array.from({ length: 47 }, (_, i) => (
            <DataRow key={i} m={i + 1} />
          ))}
        </tbody>
      </table>
      <div className="absolute bottom-[7px] left-[538px] right-0 h-[90px] bg-[#efefef]" />
    </div>
  );
}

function VerticalScroll() {
  return (
    <div className="flex w-[25px] shrink-0 flex-col items-center bg-[#f3f3f3] pb-[4px] pt-[6px]">
      <Svg w={12} h={10} stroke="none"><path d="M6 0l6 10H0z" fill="#707070" /></Svg>
      <div className="mt-[5px] h-[381px] w-[12px] rounded-full bg-[#707070]" />
      <Svg w={12} h={10} stroke="none" className="mt-auto"><path d="M6 10L0 0h12z" fill="#707070" /></Svg>
    </div>
  );
}

/* ---------- sheet tabs and status ---------- */

const Y = "bg-[#ffffcc] text-black";
const W = "bg-white text-black";
const G = "bg-[#7f7f7f] text-white";
const P = "bg-[#7030a0] text-white";

const TABS: [string, string, string][] = [
  ["Index", "w-[64px]", W],
  ["Global Control", "w-[136px]", Y],
  ["Deployment", "w-[118px]", Y],
  ["Subscriptions", "w-[127px]", ""],
  ["M1", "w-[43px]", W],
  ["M2", "w-[46px]", W],
  ["M3", "w-[46px]", W],
  ["OPEX", "w-[63px]", Y],
  ["CAPEX", "w-[73px]", Y],
  ["STAFF", "w-[69px]", Y],
  ["Loan1", "w-[65px]", Y],
  ["Loan2", "w-[68px]", Y],
  ["Cap Table", "w-[99px]", Y],
  ["Startup Costs", "w-[126px]", Y],
  ["Terminal Value", "w-[139px]", Y],
  ["IS- M", "w-[63px]", G],
  ["IS- A", "w-[58px]", G],
  ["BS- M", "w-[68px]", G],
  ["BS- A", "w-[64px]", G],
  ["CF- M", "w-[68px]", G],
  ["CF- A", "w-[63px]", G],
  ["Executive Summary", "w-[175px]", P],
  ["Distributions", "w-[122px]", P],
];

function SheetTabs() {
  return (
    <div className="flex h-[40px] shrink-0 border-t border-[#d8d8d8] bg-[#f0f0f0]">
      <button type="button" aria-label="Previous sheet" className="flex w-[70px] items-center justify-center pb-[3px]">
        <Svg w={8} h={13} stroke="#999"><path d="M7 1L1.500 6.500 7 12" /></Svg>
      </button>
      <button type="button" aria-label="Next sheet" className="mr-[59px] flex w-[12px] items-center justify-center pb-[3px]">
        <Svg w={8} h={13} stroke="#444"><path d="M1 1l5.500 5.500L1 12" /></Svg>
      </button>
      <nav className="flex min-w-0 flex-1 overflow-hidden">
        {TABS.map(([name, w, tone], i) => (
          <div key={name} className="flex shrink-0">
            {i > 0 && <span className="mx-[5px] mt-[9px] h-[22px] w-px bg-[#d0d0d0]" />}
            {name === "Subscriptions" ? (
              <button type="button" className={`-mt-px flex h-[36px] items-center justify-center rounded-b-[6px] border border-t-0 border-[#d0d0d0] bg-gradient-to-b from-white to-[#fbfbe6] text-[16px] font-bold text-[#262626] ${w}`}>
                <span className="border-b-2 border-[#107c41] leading-[24px]">{name}</span>
              </button>
            ) : (
              <button type="button" className={`mt-[4px] h-[31px] overflow-hidden whitespace-nowrap rounded-[6px] text-[16px] ${w} ${tone}`}>
                {name}
              </button>
            )}
          </div>
        ))}
      </nav>
      <div className="flex shrink-0 items-center pb-[3px] pr-[24px]">
        <button type="button" aria-label="More sheets" className="ml-[12px]">
          <Svg w={15} h={5} stroke="none"><path d="M0 .5h3.500v3.500H0zM5.500 .5H9v3.500H5.500zM11 .5h3.500v3.500H11z" fill="#444" /></Svg>
        </button>
        <button type="button" aria-label="New sheet" className="ml-[25px]">
          <Svg w={15} h={15} sw={1.6}><path d="M7.500 0v15M0 7.500h15" /></Svg>
        </button>
        <Svg w={4} h={15} stroke="none" className="ml-[32px]"><path d="M.5 0h3v3h-3zM.5 5.500h3v3h-3zM.5 11h3v3h-3z" fill="#444" /></Svg>
        <div className="ml-[20px] flex h-[20px] w-[134px] items-center rounded-full bg-[#f7f7f7] pl-[4px] pr-[5px]">
          <Svg w={10} h={12} stroke="none"><path d="M0 6l9-6v12z" fill="#707070" /></Svg>
          <div className="ml-[5px] h-[12px] w-[67px] rounded-full bg-[#707070]" />
          <Svg w={10} h={12} stroke="none" className="ml-auto"><path d="M10 6L1 0v12z" fill="#707070" /></Svg>
        </div>
      </div>
    </div>
  );
}

function StatusBar() {
  return (
    <footer className="flex h-[27px] shrink-0 items-center border-t border-white bg-[#f5f5f5] pl-[14px] pr-[17px] text-[12px] text-[#444]">
      <span className="w-[61px] text-[13px]">Ready</span>
      <Svg w={19} h={17} stroke="#444" sw={1.3}>
        <path d="M9 15H1V1h16v5M1 4.500h16M3.500 8h5M3.500 11h4" />
        <circle cx="13" cy="11.500" r="4.500" />
        <circle cx="13" cy="11.500" r="1.500" fill="#444" />
      </Svg>
      <Svg w={17} h={18} stroke="#444" sw={1.3} className="ml-[21px]">
        <circle cx="8" cy="2.500" r="1.700" />
        <path d="M1 5l5 2v4l-3 6M15 5l-5 2v3M10 11l6 6M16 11l-6 6" />
      </Svg>
      <button type="button" className="ml-[4px] font-bold">Accessibility: Investigate</button>
      <div className="ml-auto flex items-center whitespace-pre">
        <span className="flex w-[141px] gap-[9px]"><span>Average:</span><span>10,950,000</span></span>
        <span className="w-[68px]">Count: 3</span>
        <span className="flex w-[121px] gap-[9px]"><span>Sum:</span><span>32,850,000</span></span>
        <button type="button" aria-label="Normal view" className="flex h-[26px] w-[50px] items-center justify-center bg-[#dedede]">
          <Svg w={17} h={16}><path d="M1 1h15v14H1zM1 5.500h15M1 10.500h15M6 1v14M11 1v14" /></Svg>
        </button>
        <button type="button" aria-label="Page layout view" className="flex w-[50px] justify-center">
          <Svg w={18} h={16}><path d="M1 1h16v14H1zM4.500 4h9v8h-9zM6.500 6.500h5M6.500 9.500h5" /></Svg>
        </button>
        <button type="button" aria-label="Page break view" className="flex w-[50px] justify-center">
          <Svg w={18} h={16}><path d="M1 1h16v14H1zM5 1v8h9V1M9.500 1v8" /></Svg>
        </button>
        <button type="button" aria-label="Zoom out" className="ml-[5px]">
          <Svg w={11} h={11}><path d="M1 5.500h10" /></Svg>
        </button>
        <div className="relative ml-[7px] flex h-[20px] w-[125px] items-center">
          <span className="absolute left-[63px] top-[5px] h-[10px] w-px bg-[#777]" />
          <span className="absolute left-0 top-[10px] h-px w-full bg-[#777]" />
          <input
            type="range"
            aria-label="Zoom"
            defaultValue={40}
            className="relative h-[20px] w-full appearance-none bg-transparent [&::-webkit-slider-thumb]:h-[14px] [&::-webkit-slider-thumb]:w-[6px] [&::-webkit-slider-thumb]:appearance-none [&::-webkit-slider-thumb]:bg-[#666]"
          />
        </div>
        <button type="button" aria-label="Zoom in" className="ml-[5px]">
          <Svg w={11} h={11}><path d="M0 5.500h11M5.500 0v11" /></Svg>
        </button>
        <span className="ml-[16px] w-[26px]">80%</span>
      </div>
    </footer>
  );
}

/* ---------- taskbar ---------- */

const PETALS: [number, string, string][] = [
  [-78, "#dd88c1", "M43 33C34 28 35 18 43 11C51 18 52 28 43 33z"],
  [78, "#dd88c1", "M43 33C34 28 35 18 43 11C51 18 52 28 43 33z"],
  [-58, "#e59bcd", "M43 33C34 26 35 16 43 7C51 16 52 26 43 33z"],
  [58, "#e59bcd", "M43 33C34 26 35 16 43 7C51 16 52 26 43 33z"],
  [-36, "#ebabd5", "M43 33C34 26 35 14 43 4C51 14 52 26 43 33z"],
  [36, "#ebabd5", "M43 33C34 26 35 14 43 4C51 14 52 26 43 33z"],
  [-16, "#f0badd", "M43 33C34 26 35 12 43 3C51 12 52 26 43 33z"],
  [16, "#f0badd", "M43 33C34 26 35 12 43 3C51 12 52 26 43 33z"],
  [0, "#f6cde7", "M43 33C34 26 35 12 43 3C51 12 52 26 43 33z"],
];

function Lotus() {
  return (
    <svg aria-hidden="true" width="88" height="44" viewBox="0 0 88 44" className="shrink-0">
      <ellipse cx="44" cy="32" rx="43" ry="11" fill="#b9dcf8" stroke="#7fa9cc" strokeDasharray="2 1" />
      <path d="M15 31c2-6 14-9 30-9 16 0 26 3 27 8l-10 2 4 4c-6 3-14 4-24 4-16 0-27-4-27-9z" fill="#5d9a35" />
      {PETALS.map(([r, c, d]) => (
        <path key={r} d={d} fill={c} stroke="#cf7ab2" strokeWidth=".5" transform={`rotate(${r} 43 31)`} />
      ))}
      <path d="M28 26c1 7 8 10 15 10s14-3 15-10c-5 1-9 3-15 3s-10-2-15-3z" fill="#f3a6cc" stroke="#d37cb6" strokeWidth=".5" />
      <path d="M39 27l-4-11 6 8 2-11 2 11 6-8-4 11z" fill="#f7c52d" stroke="#e09a1a" strokeWidth=".5" />
    </svg>
  );
}

function TaskIcon({ name }: { name: string }) {
  switch (name) {
    case "Task view":
      return (
        <Svg w={22} h={20} stroke="#111" sw={1.4}>
          <path d="M1 0v3h12V0M1 6h12v9H1zM1 20v-3h12v3M19 0v5M19 11v9" />
          <path d="M17.500 6.500h3v3h-3z" fill="#111" />
        </Svg>
      );
    case "File Explorer":
      return (
        <Svg w={28} h={24} stroke="none">
          <path d="M0 1h12l2 3v6H0z" fill="#d99c00" />
          <path d="M0 5l13-1 1-2h14v21H0z" fill="#ffd35a" />
          <path d="M5 24V14q0-2 2-2h14q2 0 2 2v10h-5v-5h-8v5z" fill="#3a8fd8" />
        </Svg>
      );
    case "Snipping Tool":
      return (
        <Svg w={30} h={30} stroke="#e0474c">
          <ellipse cx="14" cy="8" rx="12" ry="6.500" fill="#fff" transform="rotate(-15 14 8)" strokeWidth="2" />
          <path d="M3 11c-3 5-3 9 1 9 6 0 12-4 14-9" strokeWidth="1.500" />
          <path d="M6 9l14 7M14 4l4 13" stroke="#888" strokeWidth="2" />
          <circle cx="25" cy="19" r="3.500" stroke="#1e8bcd" strokeWidth="2.200" />
          <circle cx="17" cy="25" r="3.500" stroke="#1e8bcd" strokeWidth="2.200" />
        </Svg>
      );
    case "Opera":
      return (
        <Svg w={30} h={30} stroke="none">
          <path fillRule="evenodd" d="M15 0a15 15 0 1 0 0 30a15 15 0 1 0 0-30zM15 4c4 0 6 5 6 11s-2 11-6 11-7-5-7-11 3-11 7-11z" fill="#e0182d" />
          <path d="M15 0a15 15 0 0 1 0 30c-1 0-2 0-3-.5 6 0 9-6 9-14.500S18 1 12 .5C13 0 14 0 15 0z" fill="#f2464c" opacity=".7" />
        </Svg>
      );
    case "Chrome":
      return (
        <Svg w={32} h={32} stroke="none">
          <circle cx="15" cy="15" r="15" fill="#fbc116" />
          <path d="M2 7.500A15 15 0 0 1 28 7.500H15z" fill="#e33b2e" />
          <path d="M2 7.500L9 19l6 11A15 15 0 0 1 2 7.500z" fill="#2da94f" />
          <path d="M2 7.500h26L15 8l-7 8z" fill="#e33b2e" />
          <circle cx="15" cy="15" r="7" fill="#fff" />
          <circle cx="15" cy="15" r="5.500" fill="#1a73e8" />
          <circle cx="22" cy="22" r="10" fill="#b5b5b5" />
          <path d="M13 22h18" stroke="#999" />
        </Svg>
      );
    case "Notepad":
      return (
        <Svg w={30} h={28} stroke="none">
          <path d="M24 3l3 1 1 20-6 4z" fill="#c9b48a" />
          <path d="M9 2l16 1-5 22L1 20z" fill="#7cc3d6" />
          <path d="M25 3l2 21-8 2z" fill="#fff" />
          <path d="M9 2l16 1-1 3L8 5z" fill="#e8eef0" />
          <path d="M6 10l16 3-3 12L1 20z" fill="#3fa4bd" opacity=".7" />
        </Svg>
      );
    case "Excel":
      return <ExcelLogo size={29} />;
    case "Photos":
      return (
        <Svg w={26} h={27} stroke="none">
          <rect width="26" height="27" rx="3" fill="#1d6fcf" />
          <path d="M12 0h11a3 3 0 0 1 3 3v15z" fill="#5b58c4" />
          <path d="M0 20L10 10q2-2 4 0l12 13v1a3 3 0 0 1-3 3H3a3 3 0 0 1-3-3z" fill="#35c6f4" />
          <path d="M4 27l10-11q2-2 4 0l8 7v1a3 3 0 0 1-3 3z" fill="#0a7be0" />
          <circle cx="20" cy="5" r="2.500" fill="#fff" />
        </Svg>
      );
    default:
      return (
        <Svg w={30} h={29} stroke="none">
          <circle cx="16" cy="14.500" r="14" fill="#e5532f" />
          <path d="M16 .5a14 14 0 0 1 14 14H16z" fill="#ff8f6b" />
          <path d="M2 14.500h28a14 14 0 0 1-28 0z" fill="#d35230" />
          <rect x="0" y="6.500" width="16" height="16" rx="1.500" fill="#c43e1c" />
          <path d="M6 19v-9h3.500a2.700 2.700 0 0 1 0 5.400H6" stroke="#fff" strokeWidth="2" />
        </Svg>
      );
  }
}

const APPS: [string, boolean][] = [
  ["Task view", false], ["File Explorer", false], ["Snipping Tool", false], ["Opera", true], ["Chrome", true],
  ["Notepad", true], ["Excel", true], ["Photos", true], ["PowerPoint", true],
];

function Taskbar() {
  return (
    <div className="flex h-[50px] shrink-0 bg-[#d2dfea] text-black">
      <button type="button" aria-label="Start" className="flex w-[60px] items-center justify-center">
        <Svg w={21} h={20} stroke="none">
          <path d="M0 3l8.500-1.200v7.700H0zM9.500 1.600L21 0v9.500H9.500zM0 10.500h8.500v7.700L0 17zM9.500 10.500H21V20L9.500 18.400z" fill="#111" />
        </Svg>
      </button>
      <label className="flex w-[360px] items-center border border-[#c2cad2] bg-white pl-[14px]">
        <Svg w={20} h={21} stroke="#222" sw={1.700}>
          <circle cx="12.500" cy="7.500" r="6.500" />
          <path d="M8 12L1 20" />
        </Svg>
        <input aria-label="Type here to search" placeholder="Type here to search" className="ml-[15px] w-[216px] bg-transparent text-[18px] outline-none placeholder:text-[#333]" />
        <Lotus />
      </label>
      <div className="flex pl-px">
        {APPS.map(([name, open]) => (
          <button key={name} type="button" aria-label={name} className="relative flex w-[62px] items-center justify-center">
            <TaskIcon name={name} />
            {open && <span className="absolute bottom-0 left-[6px] h-[3px] w-[51px] bg-[#0078d7]" />}
            {name === "Notepad" && <span className="absolute -right-[5px] bottom-0 h-[3px] w-[10px] bg-[#6aaee6]" />}
          </button>
        ))}
      </div>
      <div className="ml-auto flex items-center">
        <button type="button" className="flex items-center text-[17px]">
          <span className="relative mr-[10px]">
            <Svg w={28} h={28} stroke="none">
              <circle cx="14" cy="14" r="13" fill="#f39a1e" />
              <path d="M11 26a4.500 4.500 0 0 1 1-9 6 6 0 0 1 11-1 5 5 0 0 1 1 10z" fill="#cfe2f7" />
            </Svg>
            <span className="absolute -right-[2px] -top-[3px] h-[16px] w-[16px] rounded-full bg-[#c42b1c] text-center text-[11px] leading-[16px] text-white">1</span>
          </span>
          <span className="flex gap-[9px]"><span>63°F</span><span>Mostly sunny</span></span>
        </button>
        <button type="button" aria-label="Show hidden icons" className="ml-[32px]">
          <Svg w={16} h={10} stroke="#111" sw={1.600}><path d="M1 9l7-7 7 7" /></Svg>
        </button>
        <Svg w={15} h={20} stroke="#111" sw={1.4} className="ml-[16px]">
          <path d="M1 6h9v9H1zM10 9l4-3v9l-4-3M3 3q3.500-3 7 0M3 18q3.500 3 7 0" />
        </Svg>
        <Svg w={22} h={18} stroke="#111" sw={1.4} className="ml-[11px]">
          <path d="M1 6h3l5-5v16l-5-5H1zM12 6q2 3 0 6M15 3.500q4 5.500 0 11M18 1.500q5 7.500 0 15" />
        </Svg>
        <Svg w={21} h={19} stroke="#111" sw={1.4} className="ml-[9px]">
          <path d="M6 2h14v12H3V7M1 1h4v5H1zM11 14v4M7 18h8" />
        </Svg>
        <div className="ml-[12px] w-[68px] text-center text-[14px] leading-[23px]">
          9:20 AM
          <br />
          5/13/2024
        </div>
        <button type="button" aria-label="Notifications" className="ml-[23px]">
          <Svg w={21} h={21} stroke="#111" sw={1.5}><path d="M1 1h19v15h-6l-3.500 4L7 16H1z" /></Svg>
        </button>
        <button type="button" aria-label="Copilot" className="relative ml-[26px]">
          <Svg w={26} h={26} stroke="none">
            <path d="M6 1h9q2 0 3 3l2 7h-6L9 21H5q-5 0-4-5L4 4q.5-2.500 2-3z" fill="#1f86e0" />
            <path d="M13 1h3q2 0 3 3l1 5h-6z" fill="#143fa8" />
            <path d="M3 8l-2 8q-1 5 4 5h3l3-10z" fill="#35c48b" />
            <path d="M12 22l5-13h5q4 0 3 4l-2 6q-1 3-4 3z" fill="#d34fd0" />
            <path d="M12 22l3-8h9l-1 5q-1 3-4 3z" fill="#f0703c" />
          </Svg>
          <span className="absolute bottom-0 left-[5px] rounded-[2px] bg-[#ffc400] px-[2px] text-[8px] font-bold leading-[9px]">PRE</span>
        </button>
        <span className="ml-[22px] mr-[5px] h-[50px] w-px bg-[#9fb0c0]" />
      </div>
    </div>
  );
}

export default function App() {
  return (
    <div className="flex h-screen flex-col overflow-hidden bg-[#efefef] font-['Open_Sans',sans-serif] text-[#333]">
      <TitleBar />
      <MenuBar />
      <Ribbon />
      <FormulaBar />
      <main className="flex min-h-0 flex-1">
        <Sheet />
        <VerticalScroll />
      </main>
      <SheetTabs />
      <StatusBar />
      <Taskbar />
    </div>
  );
}
